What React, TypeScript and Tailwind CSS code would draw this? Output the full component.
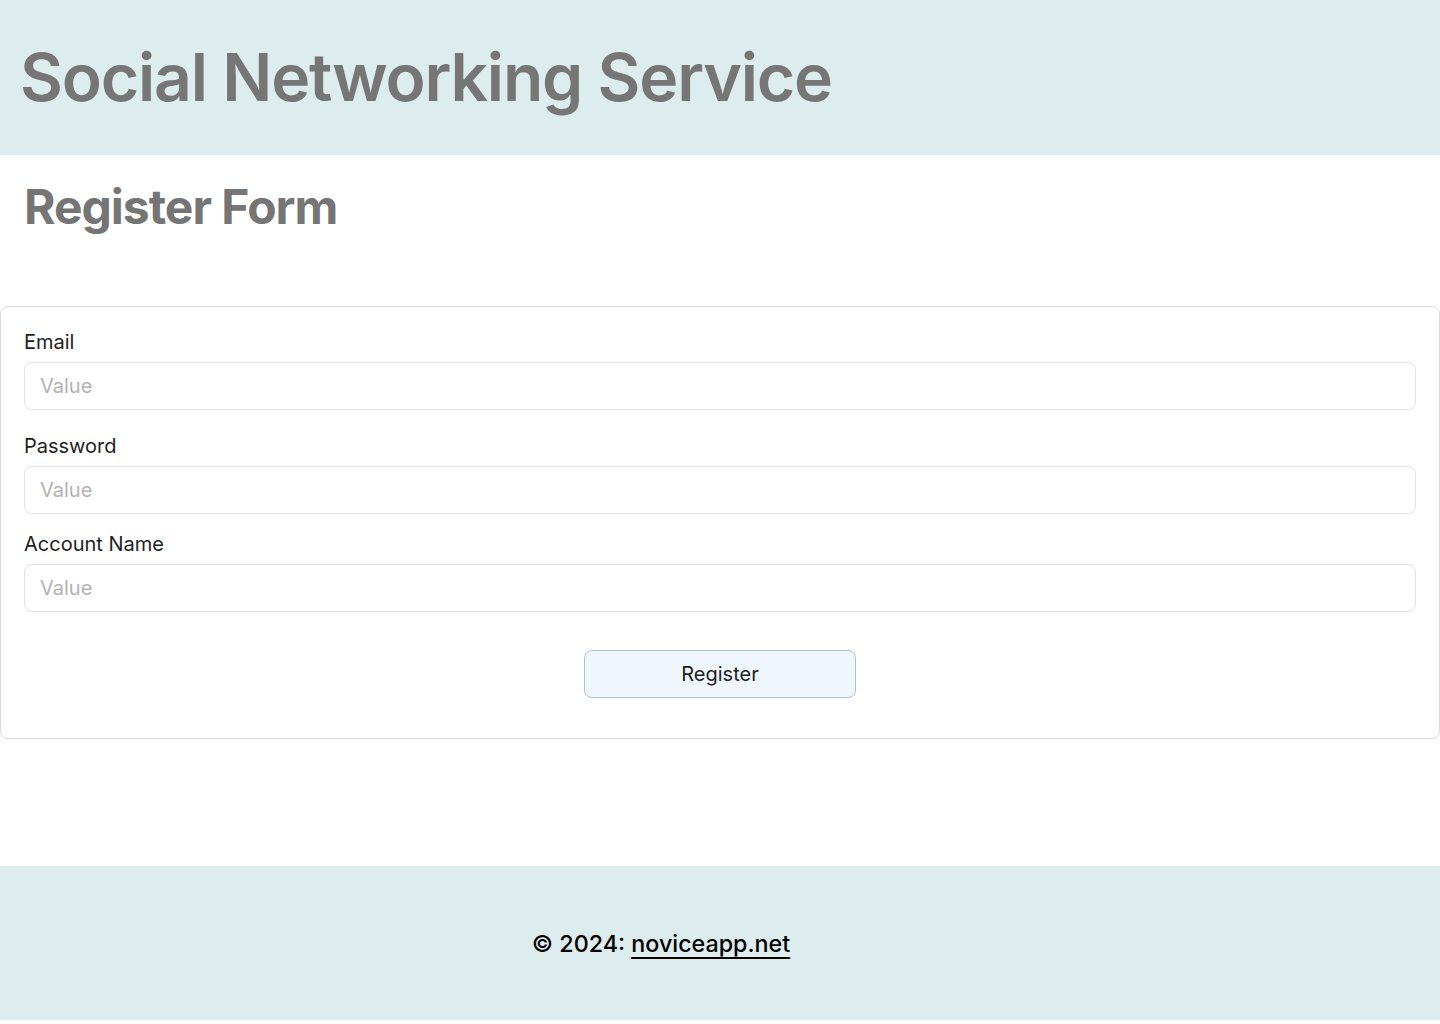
import React from "react";

function Field({ label, type, top }: { label: string; type: string; top: string }) {
  return (
    <div className={top}>
      <label className="block text-[20px] leading-6 text-[#1e1e1e] mb-[8px]">{label}</label>
      <input
        type={type}
        placeholder="Value"
        className="block w-full h-12 rounded-lg border border-[#e3e3e3] bg-white px-[15px] text-[20px] text-[#1e1e1e] placeholder:text-[#b3b3b3] outline-none"
      />
    </div>
  );
}

export default function App() {
  return (
    <div className="w-[1440px] bg-white" style={{ fontFamily: "Inter, 'Noto Sans', sans-serif" }}>
      <header className="h-[155px] bg-[#ddeced] pl-[20px] pt-[44px]">
        <h1 className="text-[66px] leading-[66px] font-semibold text-[#767676] tracking-[-1.2px]">Social Networking Service</h1>
      </header>
      <section className="pt-[28px] pl-[24px] h-[151px]">
        <h2 className="text-[48px] leading-[48px] font-bold text-[#757575] tracking-[-1px]">Register Form</h2>
      </section>
      <form className="border border-[#d9d9d9] rounded-lg px-[23px] pt-[23px] pb-[40px]" onSubmit={(e) => e.preventDefault()}>
        <Field label="Email" type="email" top="" />
        <Field label="Password" type="password" top="mt-[24px]" />
        <Field label="Account Name" type="text" top="mt-[18px]" />
        <div className="flex justify-center mt-[38px]">
          <button
            type="submit"
            className="w-[272px] h-12 rounded-lg border border-[#a9c3de] bg-[#eff6fd] text-[20px] text-[#1e1e1e]"
          >
            Register
          </button>
        </div>
      </form>
      <div className="h-[127px]" />
      <footer className="h-[154px] bg-[#ddeced] flex items-center justify-center pr-[118px] pt-[2px]">
        <p className="text-[23.3px] leading-8 font-medium text-black">
          © 2024:{" "}
          <a href="#" className="underline underline-offset-[5px] decoration-[1.5px]">noviceapp.net</a>
        </p>
      </footer>
    </div>
  );
}
